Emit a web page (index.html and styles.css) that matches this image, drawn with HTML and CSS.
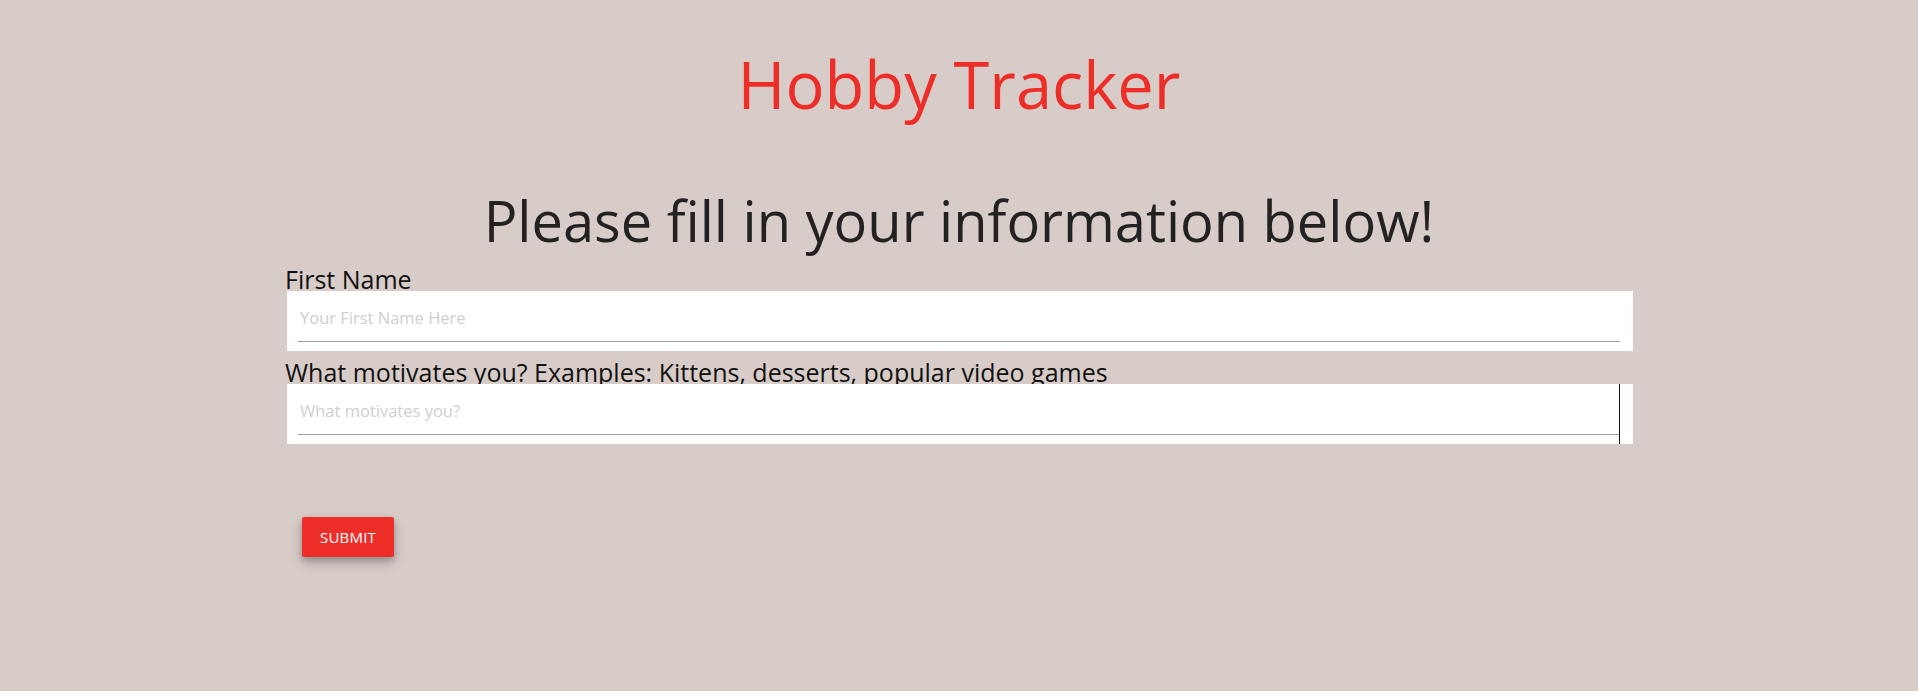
FILE: index.html
```html
<!DOCTYPE html>
<html>
<head>
<meta charset="utf-8">
<link rel="stylesheet" href="styles.css">
</head>
<body>
<div class="page">
  <h1 class="title">Hobby Tracker</h1>
  <h2 class="subtitle">Please fill in your information below!</h2>
  <form class="form">
    <label class="label" for="fname">First Name</label>
    <div class="field">
      <input id="fname" class="input" type="text" placeholder="Your First Name Here">
    </div>
    <label class="label label-gap" for="motive">What motivates you? Examples: Kittens, desserts, popular video games</label>
    <div class="field field-area">
      <input id="motive" class="input" type="text" placeholder="What motivates you?">
    </div>
    <div class="actions">
      <button type="button" class="btn">Submit</button>
    </div>
  </form>
</div>
</body>
</html>
```

FILE: styles.css
```css
html, body {
  margin: 0;
  padding: 0;
}
body {
  background: #d8ccc8;
  font-family: "Open Sans", "Noto Sans", sans-serif;
  color: #222;
  min-height: 691px;
}
.page {
  display: flex;
  flex-direction: column;
  align-items: center;
}
.title {
  margin: 44px 0 0;
  font-size: 65px;
  font-weight: 400;
  line-height: 80px;
  color: #ed2e28;
}
.subtitle {
  margin: 63px 0 14px;
  font-size: 56px;
  font-weight: 400;
  line-height: 66px;
  color: #222;
}
.form {
  width: 1350px;
  display: flex;
  flex-direction: column;
}
.label {
  display: block;
  font-size: 25px;
  line-height: 24px;
  color: #111;
  margin-left: 1px;
  position: relative;
}
.label-gap {
  margin-top: 9px;
}
.field {
  background: #fff;
  margin-left: 3px;
  margin-right: 1px;
  height: 60px;
  padding: 0 13px 9px 11px;
  box-sizing: border-box;
  display: flex;
  align-items: flex-end;
}
.field-area {
  position: relative;
}
.field-area::after {
  content: "";
  position: absolute;
  right: 13px;
  top: 0;
  bottom: 0;
  width: 1px;
  background: #111;
}
.input {
  width: 100%;
  border: 0;
  border-bottom: 1px solid #9e9e9e;
  outline: none;
  background: transparent;
  font-family: "Open Sans", "Noto Sans", sans-serif;
  font-size: 16.5px;
  height: 41px;
  padding: 0 0 7px 2px;
  box-sizing: border-box;
  color: #222;
}
.input::placeholder {
  color: #cfcfcf;
}
.actions {
  margin-top: 73px;
  padding-left: 18px;
}
.btn {
  width: 92px;
  height: 40px;
  border: 0;
  border-radius: 2px;
  background: #ed2e28;
  color: #fff;
  font-family: "Open Sans", "Noto Sans", sans-serif;
  font-size: 15px;
  text-transform: uppercase;
  letter-spacing: 0.2px;
  box-shadow: 0 3px 6px rgba(0,0,0,0.22), 0 6px 14px rgba(0,0,0,0.18);
  cursor: pointer;
}
```
